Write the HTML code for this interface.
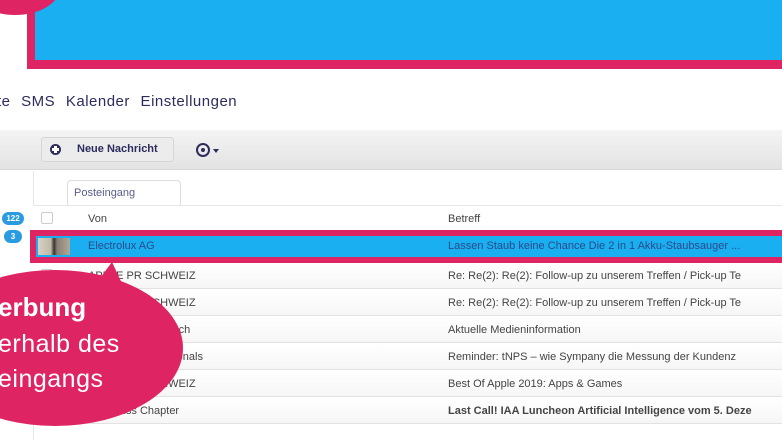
<!DOCTYPE html>
<html><head><meta charset="utf-8"><style>
*{margin:0;padding:0;box-sizing:border-box}
body{width:782px;height:440px;overflow:hidden;background:#fff;position:relative;font-family:"Liberation Sans","DejaVu Sans",sans-serif}
.a{position:absolute}
.nav{top:93px;left:-3px;font-size:15px;color:#2c2d5c;white-space:nowrap;word-spacing:6px;letter-spacing:0.5px}
.row{position:absolute;left:33px;right:0;height:26px;border-bottom:1px solid #e2e2e2;background:linear-gradient(#fff,#f6f6f6);font-size:11px;color:#444}
.row span{position:absolute;top:7px}
.cb{position:absolute;left:8px;top:6px;width:12px;height:12px;border:1px solid #ccc;border-radius:2px;background:#fff}
</style></head><body>
<div class="a" style="left:27px;top:0;width:760px;height:69px;background:#df2463"></div>
<div class="a" style="left:35px;top:0;width:760px;height:60px;background:#1aaff0"></div>
<div class="a" style="left:-30px;top:-40px;width:90px;height:55px;border-radius:50%;background:#df2463"></div>

<div class="a nav">te SMS Kalender Einstellungen</div>

<div class="a" style="left:0;top:130px;width:782px;height:40px;background:linear-gradient(#f4f4f4,#e3e3e3);border-bottom:1px solid #d8d8d8"></div>
<div class="a" style="left:41px;top:137px;width:133px;height:25px;border:1px solid #d6d6d6;border-radius:3px;background:#ececec;font-size:11px;font-weight:bold;color:#2c2d5c;padding:5px 0 0 35px">Neue Nachricht</div>
<div class="a" style="left:50px;top:144px;width:11px;height:11px;border-radius:50%;background:#2c2d5c"></div>
<div class="a" style="left:54px;top:146px;width:3px;height:7px;background:#fff"></div>
<div class="a" style="left:52px;top:148px;width:7px;height:3px;background:#fff"></div>
<div class="a" style="left:196px;top:143px;width:14px;height:14px;border-radius:50%;border:2px solid #2c2d5c"></div>
<div class="a" style="left:201px;top:148px;width:4px;height:4px;border-radius:50%;background:#2c2d5c"></div>
<div class="a" style="left:213px;top:149px;border-left:3px solid transparent;border-right:3px solid transparent;border-top:4px solid #2c2d5c"></div>

<div class="a" style="left:33px;top:171px;width:1px;height:269px;background:#e6e6e6"></div>
<div class="a" style="left:2px;top:212px;width:22px;height:13px;border-radius:7px;background:#2a9be0;color:#fff;font-size:8px;font-weight:bold;text-align:center;line-height:13px">122</div>
<div class="a" style="left:4px;top:230px;width:18px;height:13px;border-radius:7px;background:#2a9be0;color:#fff;font-size:8px;font-weight:bold;text-align:center;line-height:13px">3</div>

<div class="a" style="left:67px;top:180px;width:114px;height:26px;border:1px solid #ddd;border-bottom:none;border-radius:4px 4px 0 0;background:#fff;font-size:11px;color:#5a5c8a;padding:6px 0 0 6px">Posteingang</div>
<div class="a" style="left:33px;top:205px;width:749px;height:1px;background:#e6e6e6"></div>

<div class="row" style="top:206px;background:#fff"><div class="cb"></div><span style="left:55px">Von</span><span style="left:415px">Betreff</span></div>

<div class="a" style="left:30px;top:230px;width:760px;height:33px;background:#df2463"></div>
<div class="a" style="left:36px;top:236px;width:750px;height:21px;background:#1aaff0;font-size:11px;color:#2b4a8a"><span class="a" style="left:52px;top:4px">Electrolux AG</span><span class="a" style="left:412px;top:4px">Lassen Staub keine Chance Die 2 in 1 Akku-Staubsauger ...</span></div>
<div class="a" style="left:38px;top:238px;width:32px;height:17px;background:linear-gradient(90deg,#d8d0c0 0,#c0b8a8 40%,#3a3530 50%,#8a8075 60%,#b0a898 100%)"></div>

<div class="row" style="top:263px"><div class="cb"></div><span style="left:55px">APPLE PR SCHWEIZ</span><span style="left:415px">Re: Re(2): Re(2): Follow-up zu unserem Treffen / Pick-up Te</span></div>
<div class="row" style="top:290px"><div class="cb"></div><span style="left:55px">APPLE PR SCHWEIZ</span><span style="left:415px">Re: Re(2): Re(2): Follow-up zu unserem Treffen / Pick-up Te</span></div>
<div class="row" style="top:317px"><div class="cb"></div><span style="left:55px">info@friedenslicht.ch</span><span style="left:415px">Aktuelle Medieninformation</span></div>
<div class="row" style="top:344px"><div class="cb"></div><span style="left:55px">Sympany Professionals</span><span style="left:415px">Reminder: tNPS – wie Sympany die Messung der Kundenz</span></div>
<div class="row" style="top:371px"><div class="cb"></div><span style="left:55px">APPLE PR SCHWEIZ</span><span style="left:415px">Best Of Apple 2019: Apps &amp; Games</span></div>
<div class="row" style="top:398px"><div class="cb"></div><span style="left:55px">IAA Swiss Chapter</span><span style="left:415px;font-weight:bold">Last Call! IAA Luncheon Artificial Intelligence vom 5. Deze</span></div>

<svg class="a" style="left:0;top:0" width="782" height="440">
<polygon points="95,285 112,262 125,290" fill="#df2463"/>
<ellipse cx="55" cy="348" rx="128" ry="78" fill="#df2463"/>
</svg>
<div class="a" style="left:-2px;top:292px;color:#fff;font-size:26px;font-weight:bold;line-height:30px">erbung</div>
<div class="a" style="left:-2px;top:327px;color:#fff;font-size:25px;line-height:35px;letter-spacing:0.5px">erhalb des<br>eingangs</div>
</body></html>
